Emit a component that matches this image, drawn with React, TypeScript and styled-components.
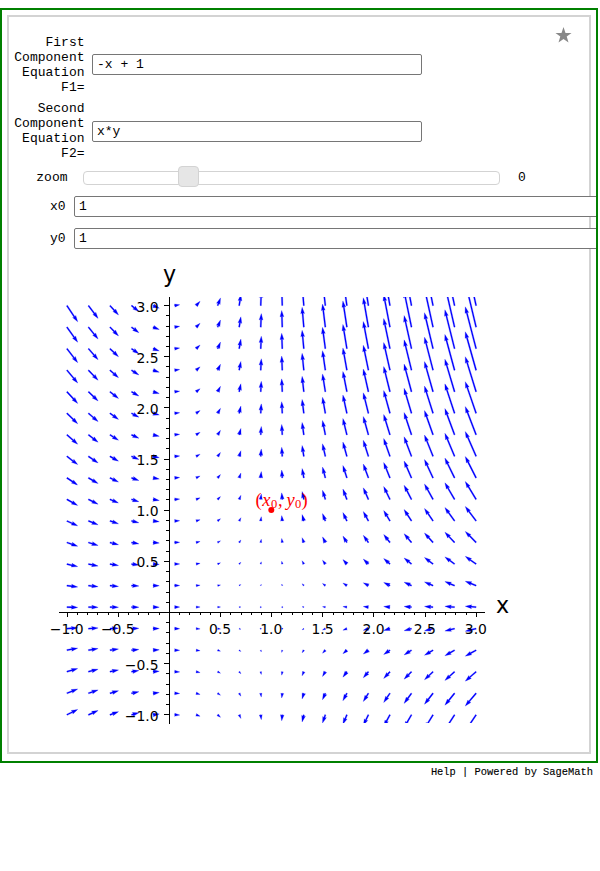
import React from "react";
import styled, { createGlobalStyle } from "styled-components";

const GlobalStyle = createGlobalStyle`
  body {
    margin: 0;
    background: #fff;
    color: #000;
    font: 13px/15px "Liberation Mono", "Courier New", monospace;
  }
  * { box-sizing: border-box; }
`;

const Page = styled.main`
  width: 600px;
  padding-top: 8px;
`;

const Cell = styled.section`
  width: 598px;
  height: 755px;
  padding: 5px;
  border: 2px solid #008000;
  overflow: hidden;
`;

const Interact = styled.div`
  width: 584px;
  height: 739px;
  padding-top: 18px;
  border: 2px solid #d3d3d3;
  position: relative;
`;

const Star = styled.svg`
  position: absolute;
  top: 10px;
  right: 17px;
  width: 17px;
  height: 16px;
`;

const Row = styled.div<{ $label: number; $gap: number; $height: number; $after: number }>`
  display: grid;
  grid-template-columns: ${(p) => p.$label}px max-content max-content;
  column-gap: ${(p) => p.$gap}px;
  align-items: center;
  height: ${(p) => p.$height}px;
  margin-bottom: ${(p) => p.$after}px;
`;

const Label = styled.label<{ $drop?: number }>`
  padding-top: ${(p) => p.$drop ?? 0}px;
  padding-right: 0.5px;
  text-align: right;
`;

const Field = styled.input<{ $width: number; $lift?: number }>`
  width: ${(p) => p.$width}px;
  height: 21px;
  margin-bottom: ${(p) => p.$lift ?? 0}px;
  padding: 1px 4px;
  border: 1px solid #767676;
  border-radius: 2px;
  background: #fff;
  color: #000;
  font: inherit;
  outline: none;
`;

const Track = styled.div`
  display: flex;
  align-items: center;
  width: 417px;
  height: 14px;
  margin-top: 2px;
  padding-left: 94px;
  border: 1px solid #d3d3d3;
  border-radius: 4px;
`;

const Handle = styled.div`
  flex: none;
  width: 21px;
  height: 21px;
  margin-top: -3px;
  border: 1px solid #d3d3d3;
  border-radius: 4px;
  background: #e6e6e6;
`;

const SliderValue = styled.span`
  margin-left: 3px;
  padding-top: 2px;
`;

const Plot = styled.svg`
  display: block;
  width: 580px;
  height: 490px;
`;

const Tick = styled.text`
  font: 13.9px "DejaVu Sans", sans-serif;
`;

const AxisName = styled.text`
  font: 22.2px "DejaVu Sans", sans-serif;
`;

const MathText = styled.text`
  font: 18.5px "Liberation Serif", serif;
  fill: #f00;
`;

const Footer = styled.footer`
  width: 593px;
  padding-top: 2px;
  text-align: right;
  font-size: 10.4px;
  -webkit-text-stroke: 0.12px #000;
`;

const ORIGIN_X = 169.2;
const ORIGIN_Y = 612.5;
const UNIT = 102.3;
const SPAN = 426;
const COUNT = 20;

const px = (x: number) => ORIGIN_X + UNIT * x;
const py = (y: number) => ORIGIN_Y - UNIT * y;

const grid = Array.from({ length: COUNT }, (_, i) => -1 + (4 * i) / (COUNT - 1));
const field = grid.flatMap((x) => grid.map((y) => ({ x, y, u: 1 - x, v: x * y })));
const meanLength = field.reduce((s, p) => s + Math.hypot(p.u, p.v), 0) / field.length;
const scale = SPAN / (1.8 * meanLength * COUNT);
const shaft = (0.06 / COUNT) * SPAN;

const HEAD = 5;
const HEAD_AXIS = 4.5;
const HEAD_WIDTH = 3;

// Outline of a single arrow, in pixels; very short vectors become hexagonal dots.
function arrowPath(x: number, y: number, u: number, v: number): string {
  const length = (Math.hypot(u, v) * scale) / shaft;
  const angle = Math.atan2(-v, u);
  let points: number[][];
  if (length < 1) {
    points = Array.from({ length: 6 }, (_, k) => [
      Math.cos((k * Math.PI) / 3) * 0.5,
      Math.sin((k * Math.PI) / 3) * 0.5,
    ]);
  } else {
    const k = Math.min(1, length / HEAD);
    const half = 0.5 * k;
    const wing = half * HEAD_WIDTH;
    const neck = length - HEAD_AXIS * k;
    const back = length - HEAD * k;
    points = [[0, -half], [neck, -half], [back, -wing], [length, 0], [back, wing], [neck, half], [0, half]];
  }
  const c = Math.cos(angle) * shaft;
  const s = Math.sin(angle) * shaft;
  return (
    "M" +
    points
      .map(([a, b]) => `${(px(x) + a * c - b * s).toFixed(2)},${(py(y) + a * s + b * c).toFixed(2)}`)
      .join("L") +
    "Z"
  );
}

const arrows = field.map((p) => arrowPath(p.x, p.y, p.u, p.v)).join("");
const tenths = Array.from({ length: 41 }, (_, i) => i - 10).filter((t) => t !== 0);
const majors = tenths.filter((t) => t % 5 === 0);
const name = (t: number) => (t < 0 ? "\u2212" : "") + Math.abs(t / 10).toFixed(1);

const axes =
  "M59 612.5H485M169.5 297V724" +
  tenths
    .map((t) => {
      const size = t % 5 === 0 ? 5 : 3;
      return `M${Math.floor(px(t / 10) + 0.2) + 0.5} 612v${size}M169 ${Math.floor(py(t / 10)) + 0.5}h-${size}`;
    })
    .join("");

function VectorField() {
  return (
    <Plot viewBox="9 255 580 490">
      <clipPath id="frame">
        <rect x="59" y="297" width="426" height="426" />
      </clipPath>
      <path d={arrows} fill="#00f" stroke="#00f" strokeWidth="0.25" clipPath="url(#frame)" />
      <path d={axes} stroke="#000" fill="none" />
      {majors.map((t) => (
        <Tick key={`x${t}`} x={px(t / 10) - 0.2} y="634" textAnchor="middle">{name(t)}</Tick>
      ))}
      {majors.map((t) => (
        <Tick key={`y${t}`} x="158.6" y={py(t / 10) + 6} textAnchor="end">{name(t)}</Tick>
      ))}
      <AxisName x="496" y="613">x</AxisName>
      <AxisName x="163" y="281.7">y</AxisName>
      <circle cx="271.3" cy="510" r="3" fill="#f00" />
      <MathText y="506">
        <tspan x="255.5">(</tspan>
        <tspan x="262.3" fontStyle="italic">x</tspan>
        <tspan x="271" y="508" fontSize="12.5">0</tspan>
        <tspan x="278" y="506">,</tspan>
        <tspan x="286.5" fontStyle="italic">y</tspan>
        <tspan x="295" y="508" fontSize="12.5">0</tspan>
        <tspan x="301.5" y="506">)</tspan>
      </MathText>
    </Plot>
  );
}

export default function App() {
  return (
    <Page>
      <GlobalStyle />
      <Cell>
        <Interact>
          <Star viewBox="0 0 17 16">
            <path d="M8.5 0L10.5 6H16.5L11.7 9.6L13.5 15.5L8.5 11.9L3.5 15.5L5.3 9.6L.5 6H6.5Z" fill="#888" />
          </Star>
          <Row $label={76} $gap={7} $height={60} $after={6}>
            <Label>First Component Equation F1=</Label>
            <Field $width={330} $lift={2} defaultValue="-x + 1" />
          </Row>
          <Row $label={76} $gap={7} $height={60} $after={5}>
            <Label>Second Component Equation F2=</Label>
            <Field $width={330} defaultValue="x*y" />
          </Row>
          <Row $label={59} $gap={15} $height={21} $after={9}>
            <Label $drop={2}>zoom</Label>
            <Track><Handle /></Track>
            <SliderValue>0</SliderValue>
          </Row>
          <Row $label={57} $gap={8} $height={21} $after={11}>
            <Label>x0</Label>
            <Field $width={560} defaultValue="1" />
          </Row>
          <Row $label={57} $gap={8} $height={21} $after={6}>
            <Label>y0</Label>
            <Field $width={560} defaultValue="1" />
          </Row>
          <VectorField />
        </Interact>
      </Cell>
      <Footer>Help | Powered by SageMath</Footer>
    </Page>
  );
}
